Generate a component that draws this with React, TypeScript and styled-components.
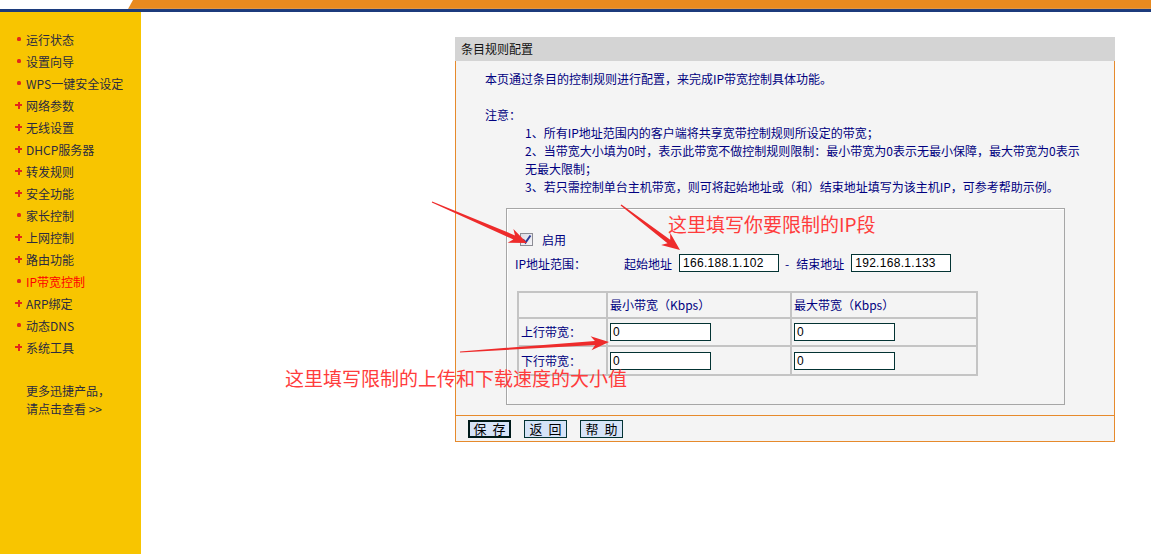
import React from 'react'
import styled, { createGlobalStyle } from 'styled-components'

const GlobalStyle = createGlobalStyle`
  html, body {
    margin: 0;
    padding: 0;
    background: #ffffff;
  }
  body {
    font-family: "SimSun", "Noto Sans CJK SC", sans-serif;
    font-size: 12px;
  }
`

type MenuEntry = {
  label: string,
  sub: boolean,
  active?: boolean
}

const menu: MenuEntry[] = [
  { label: '运行状态', sub: false },
  { label: '设置向导', sub: false },
  { label: 'WPS一键安全设定', sub: false },
  { label: '网络参数', sub: true },
  { label: '无线设置', sub: true },
  { label: 'DHCP服务器', sub: true },
  { label: '转发规则', sub: true },
  { label: '安全功能', sub: true },
  { label: '家长控制', sub: false },
  { label: '上网控制', sub: true },
  { label: '路由功能', sub: true },
  { label: 'IP带宽控制', sub: false, active: true },
  { label: 'ARP绑定', sub: true },
  { label: '动态DNS', sub: false },
  { label: '系统工具', sub: true },
]

// polygon for a tapered annotation arrow from (x1,y1) to tip (x2,y2)
const arrowPoints = (x1: number, y1: number, x2: number, y2: number, headLen = 18, headW = 15, neckW = 4.5) => {
  const dx = x2 - x1
  const dy = y2 - y1
  const len = Math.sqrt(dx * dx + dy * dy)
  const ux = dx / len
  const uy = dy / len
  const nx = -uy
  const ny = ux
  const bx = x2 - ux * (headLen - 4)
  const by = y2 - uy * (headLen - 4)
  const wx = x2 - ux * headLen
  const wy = y2 - uy * headLen
  const pts = [
    [x1 + nx * 0.6, y1 + ny * 0.6],
    [bx + nx * neckW / 2, by + ny * neckW / 2],
    [wx + nx * headW / 2, wy + ny * headW / 2],
    [x2, y2],
    [wx - nx * headW / 2, wy - ny * headW / 2],
    [bx - nx * neckW / 2, by - ny * neckW / 2],
    [x1 - nx * 0.6, y1 - ny * 0.6],
  ]
  return pts.map(p => p[0].toFixed(1) + ',' + p[1].toFixed(1)).join(' ')
}

const Checkbox = () => (
  <CheckBox>
    <svg width="11" height="11" viewBox="0 0 11 11">
      <path d="M2 5.5 L4.5 8.5 L9.5 1.5" fill="none" stroke="#2b3d96" strokeWidth="2" />
    </svg>
  </CheckBox>
)

export const App = () => {
  return (
    <Page>
      <GlobalStyle />
      <Header>
        <HeaderBand />
      </Header>
      <BlueLine />

      <Main>
        <Sidebar>
          {menu.map(m => (
            <MenuItem key={m.label} $active={m.active}>
              <Bullet $sub={m.sub} />
              {m.label}
            </MenuItem>
          ))}
          <More>
            <div>更多迅捷产品，</div>
            <div>请点击查看 &gt;&gt;</div>
          </More>
        </Sidebar>

        <Content>
          <Panel>
            <TitleBar>条目规则配置</TitleBar>
            <Body>
              <Line>本页通过条目的控制规则进行配置，来完成IP带宽控制具体功能。</Line>
              <Note>注意：</Note>
              <List>
                <Line>1、所有IP地址范围内的客户端将共享宽带控制规则所设定的带宽；</Line>
                <Line>2、当带宽大小填为0时，表示此带宽不做控制规则限制：最小带宽为0表示无最小保障，最大带宽为0表示</Line>
                <Line>无最大限制；</Line>
                <Line>3、若只需控制单台主机带宽，则可将起始地址或（和）结束地址填写为该主机IP，可参考帮助示例。</Line>
              </List>

              <RuleBox>
                <CheckRow>
                  <Checkbox />
                  <span>启用</span>
                </CheckRow>
                <IpRow>
                  <RangeLabel>IP地址范围：</RangeLabel>
                  <span>起始地址</span>
                  <IpInput defaultValue="166.188.1.102" />
                  <Dash>-</Dash>
                  <span>结束地址</span>
                  <IpInput defaultValue="192.168.1.133" />
                </IpRow>

                <RateTable>
                  <tbody>
                    <tr>
                      <Cell $w={89} $h={26}></Cell>
                      <Cell $w={184} $h={26}>最小带宽（Kbps）</Cell>
                      <Cell $w={186} $h={26}>最大带宽（Kbps）</Cell>
                    </tr>
                    <tr>
                      <Cell $w={89} $h={28}>上行带宽：</Cell>
                      <Cell $w={184} $h={28}><RateInput defaultValue="0" /></Cell>
                      <Cell $w={186} $h={28}><RateInput defaultValue="0" /></Cell>
                    </tr>
                    <tr>
                      <Cell $w={89} $h={29}>下行带宽：</Cell>
                      <Cell $w={184} $h={29}><RateInput defaultValue="0" /></Cell>
                      <Cell $w={186} $h={29}><RateInput defaultValue="0" /></Cell>
                    </tr>
                  </tbody>
                </RateTable>
              </RuleBox>
            </Body>
            <ButtonBar>
              <Button $focused>保 存</Button>
              <Button>返 回</Button>
              <Button>帮 助</Button>
            </ButtonBar>
          </Panel>
        </Content>
      </Main>

      <Overlay width="1151" height="554" viewBox="0 0 1151 554">
        <polygon points={arrowPoints(432, 202, 527, 243)} fill="#ee2b2b" />
        <polygon points={arrowPoints(621, 205, 680, 250)} fill="#ee2b2b" />
        <polygon points={arrowPoints(460, 352, 609, 342, 18, 14, 4)} fill="#ee2b2b" />
      </Overlay>
      <Callout style={{ left: 668, top: 214 }}>这里填写你要限制的IP段</Callout>
      <Callout style={{ left: 285, top: 368 }}>这里填写限制的上传和下载速度的大小值</Callout>
    </Page>
  )
}

export default App

const Page = styled.div`
  position: relative;
  width: 1151px;
  height: 554px;
  overflow: hidden;
  display: flex;
  flex-direction: column;
  background: #ffffff;
`

const Header = styled.div`
  height: 9px;
  display: flex;
  background: #ffffff;
`

const HeaderBand = styled.div`
  flex: 1;
  margin-left: 128px;
  background: linear-gradient(#e88a1f, #e88a1f 85%, #d8a060);
  clip-path: polygon(5px 0, 100% 0, 100% 100%, 0 100%);
`

const BlueLine = styled.div`
  height: 3px;
  background: #1c3b7c;
`

const Main = styled.div`
  flex: 1;
  display: flex;
`

const Sidebar = styled.div`
  width: 141px;
  flex-shrink: 0;
  box-sizing: border-box;
  background: #f8c500;
  padding: 16px 0 0 15px;
`

const MenuItem = styled.div<{ $active?: boolean }>`
  display: flex;
  align-items: center;
  gap: 4px;
  height: 22px;
  font-size: 12px;
  color: ${p => p.$active ? '#ff0000' : '#2b2b40'};
  white-space: nowrap;
`

const Bullet = styled.span<{ $sub: boolean }>`
  position: relative;
  width: 7px;
  height: 7px;
  flex-shrink: 0;

  &::before, &::after {
    content: '';
    position: absolute;
    background: #e3261b;
  }

  &::before {
    left: ${p => p.$sub ? '0' : '1.5px'};
    top: ${p => p.$sub ? '2.5px' : '1.5px'};
    width: ${p => p.$sub ? '7px' : '4px'};
    height: ${p => p.$sub ? '2px' : '4px'};
    border-radius: ${p => p.$sub ? '0' : '1.5px'};
  }

  &::after {
    left: 2.5px;
    top: 0;
    width: 2px;
    height: 7px;
    display: ${p => p.$sub ? 'block' : 'none'};
  }
`

const More = styled.div`
  margin-top: 24px;
  padding-left: 11px;
  line-height: 18px;
  color: #2b2b40;
`

const Content = styled.div`
  flex: 1;
  padding: 25px 0 0 314px;
`

const Panel = styled.div`
  width: 660px;
`

const TitleBar = styled.div`
  height: 24px;
  line-height: 24px;
  padding-left: 6px;
  background: #d4d4d4;
  color: #111111;
`

const Body = styled.div`
  height: 354px;
  box-sizing: border-box;
  padding: 9px 0 0 29px;
  background: #f4f4f4;
  border-left: 1px solid #e68a2c;
  border-right: 1px solid #e68a2c;
  color: #000080;
`

const Line = styled.div`
  line-height: 18px;
  white-space: nowrap;
`

const Note = styled(Line)`
  margin-top: 18px;
`

const List = styled.div`
  padding-left: 40px;
`

const RuleBox = styled.div`
  margin: 12px 0 0 21px;
  width: 559px;
  height: 197px;
  box-sizing: border-box;
  border: 1px solid #a6a6a6;
  box-shadow: inset 1px 1px 0 #ffffff;
  padding: 21px 0 0 0;
`

const CheckRow = styled.div`
  display: flex;
  align-items: center;
  gap: 9px;
  height: 18px;
  padding-left: 13px;
`

const CheckBox = styled.span`
  width: 13px;
  height: 13px;
  box-sizing: border-box;
  border: 1px solid #8c8c94;
  background: linear-gradient(135deg, #dcdce4, #f4f4f8);
  display: flex;
  align-items: center;
  justify-content: center;
`

const IpRow = styled.div`
  display: flex;
  align-items: center;
  height: 20px;
  margin-top: 5px;
  padding-left: 8px;

  & > span {
    white-space: nowrap;
  }
`

const RangeLabel = styled.span`
  width: 109px;
`

const IpInput = styled.input`
  width: 100px;
  height: 18px;
  box-sizing: border-box;
  margin: 0 6px 0 7px;
  padding: 0 3px;
  border: 1px solid #033333;
  background: #ffffff;
  font-family: "Liberation Sans", sans-serif;
  font-size: 12px;
  letter-spacing: 0.3px;
  color: #000000;
  outline: none;
`

const Dash = styled.span`
  margin-right: 7px;
`

const RateTable = styled.table`
  margin: 18px 0 0 10px;
  border-collapse: collapse;
  border-spacing: 0;
  border: 1px solid #a0a0a0;
`

const Cell = styled.td<{ $w: number, $h: number }>`
  width: ${p => p.$w}px;
  height: ${p => p.$h}px;
  box-sizing: border-box;
  padding: 0 0 0 2px;
  border: 2px solid #c4c4c4;
  line-height: 14px;
  white-space: nowrap;
  color: #000080;
`

const RateInput = styled.input`
  width: 101px;
  height: 18px;
  box-sizing: border-box;
  padding: 0 2px;
  border: 1px solid #033333;
  background: #ffffff;
  font-family: "Liberation Sans", sans-serif;
  font-size: 12px;
  color: #000000;
  outline: none;
  display: block;
`

const ButtonBar = styled.div`
  height: 27px;
  box-sizing: border-box;
  display: flex;
  align-items: center;
  gap: 13px;
  padding-left: 12px;
  background: #f4f4f4;
  border: 1px solid #e68a2c;
`

const Button = styled.button<{ $focused?: boolean }>`
  width: 43px;
  height: 18px;
  box-sizing: border-box;
  padding: 0;
  background: #d6e4f8;
  border: ${p => p.$focused ? '2px solid #001a1a' : '1px solid #033333'};
  font-family: "SimSun", "Noto Sans CJK SC", sans-serif;
  font-size: 13px;
  line-height: 14px;
  word-spacing: 3px;
  color: #000000;
`

const Overlay = styled.svg`
  position: absolute;
  left: 0;
  top: 0;
  pointer-events: none;
`

const Callout = styled.div`
  position: absolute;
  font-family: "Noto Sans CJK SC", sans-serif;
  font-size: 19px;
  line-height: 19px;
  color: #ff3c3c;
  white-space: nowrap;
  pointer-events: none;
`
